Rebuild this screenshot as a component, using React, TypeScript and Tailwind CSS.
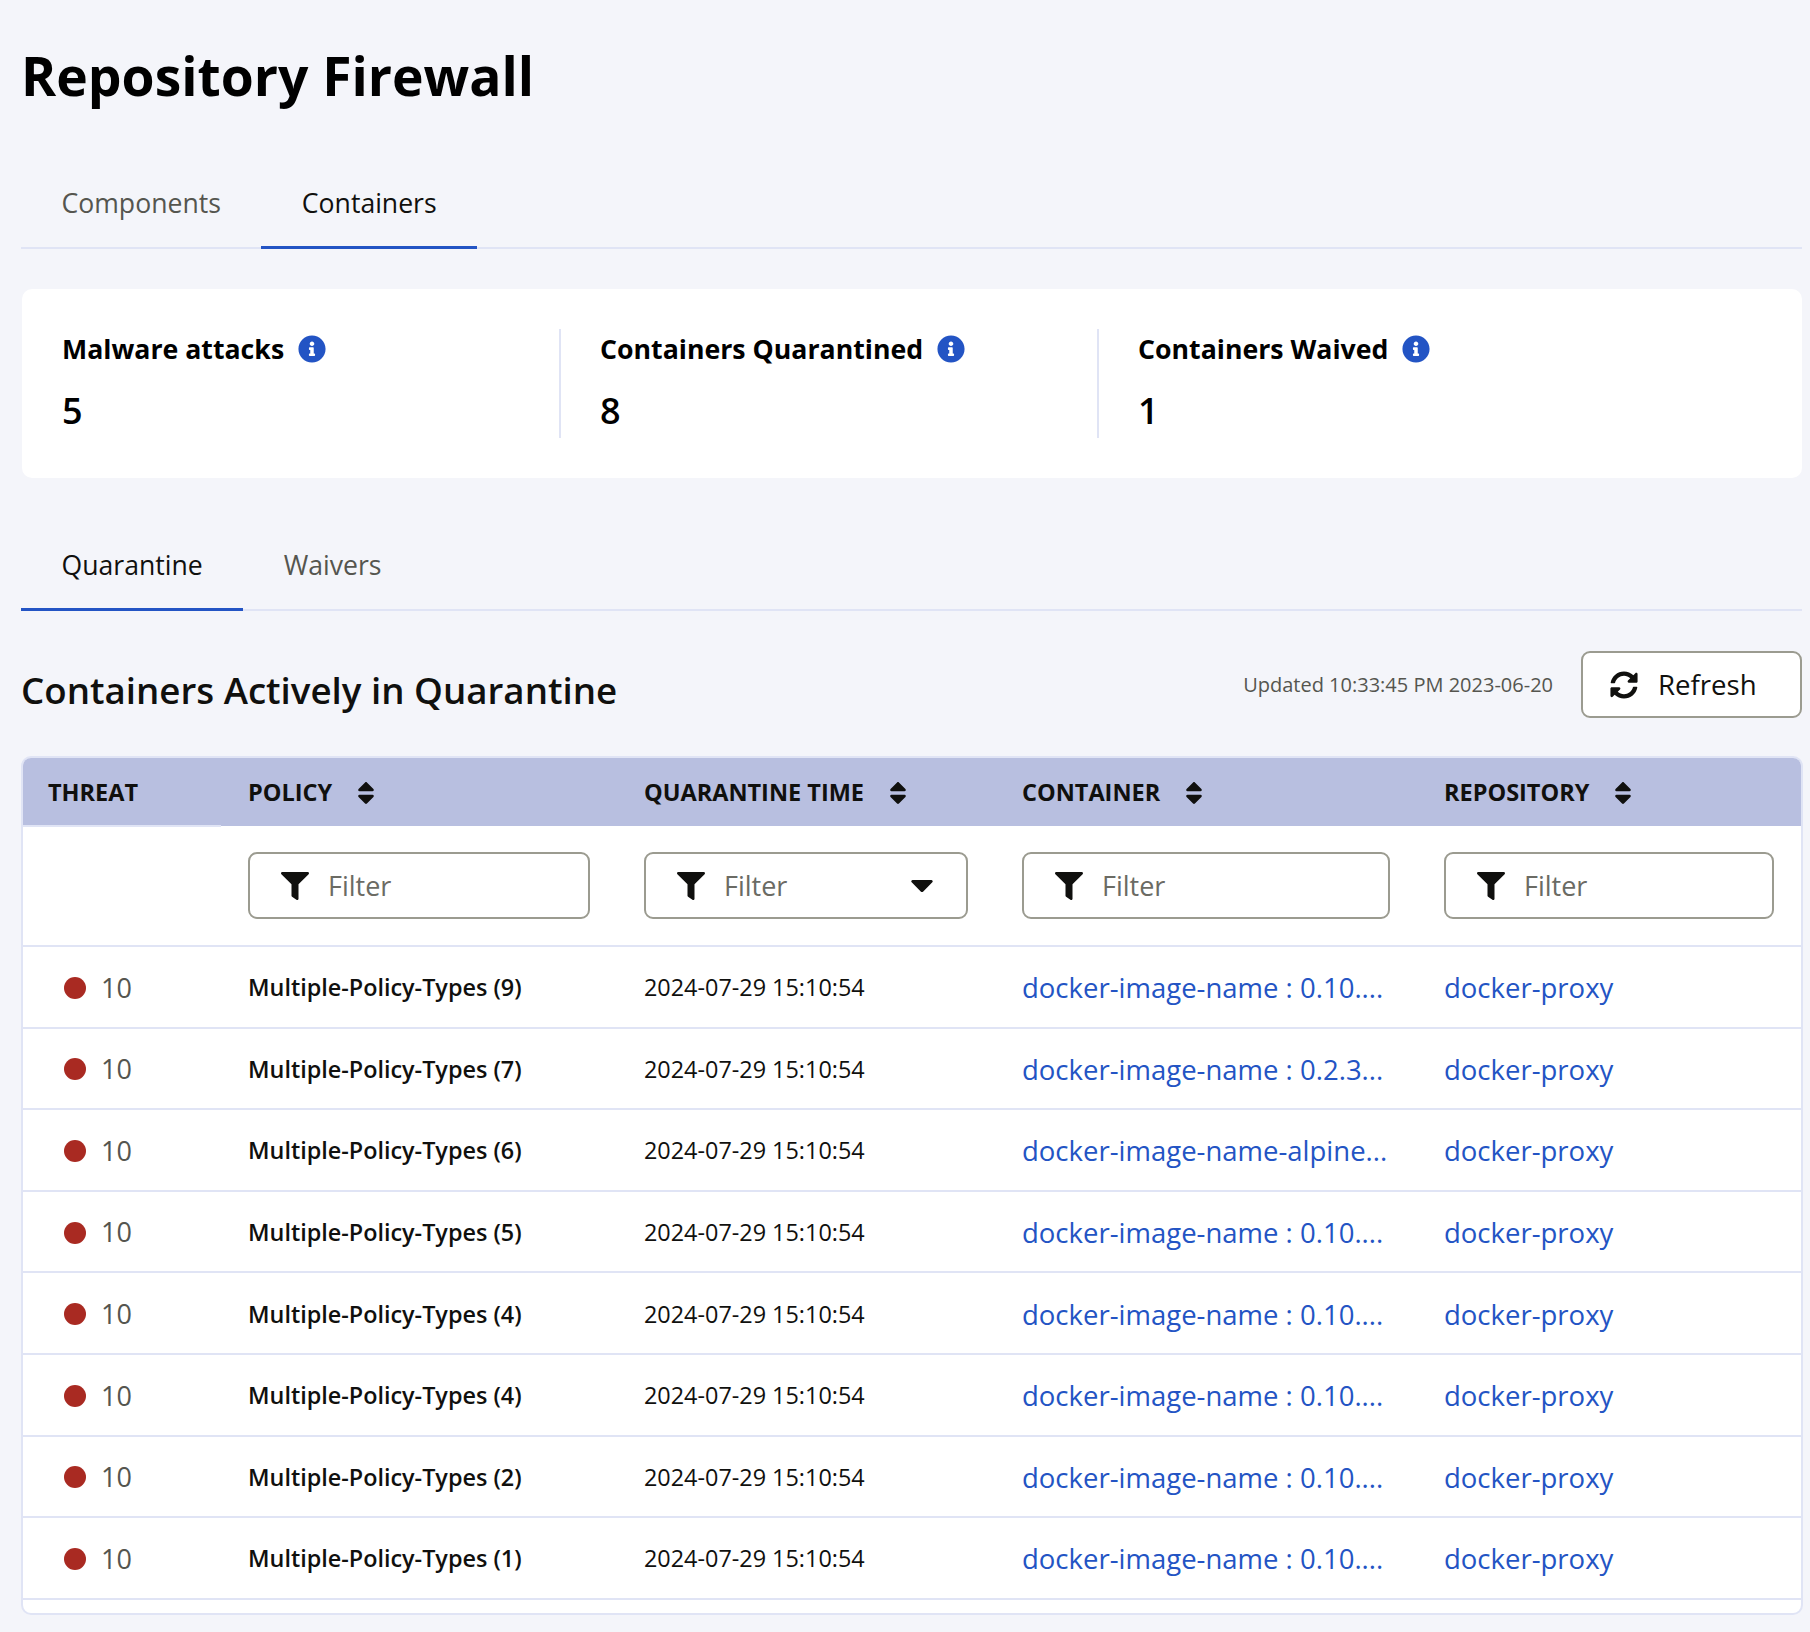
import React from 'react';
import { FaCaretDown, FaFilter, FaInfoCircle, FaSort, FaSyncAlt } from 'react-icons/fa';

const rows = [
  { policy: 'Multiple-Policy-Types (9)', container: 'docker-image-name : 0.10....' },
  { policy: 'Multiple-Policy-Types (7)', container: 'docker-image-name : 0.2.3...' },
  { policy: 'Multiple-Policy-Types (6)', container: 'docker-image-name-alpine...' },
  { policy: 'Multiple-Policy-Types (5)', container: 'docker-image-name : 0.10....' },
  { policy: 'Multiple-Policy-Types (4)', container: 'docker-image-name : 0.10....' },
  { policy: 'Multiple-Policy-Types (4)', container: 'docker-image-name : 0.10....' },
  { policy: 'Multiple-Policy-Types (2)', container: 'docker-image-name : 0.10....' },
  { policy: 'Multiple-Policy-Types (1)', container: 'docker-image-name : 0.10....' },
];

const stats = [
  { label: 'Malware attacks', value: '5', box: 'w-[539px] pl-[40px] border-r-2' },
  { label: 'Containers Quarantined', value: '8', box: 'w-[538px] pl-[39px] border-r-2' },
  { label: 'Containers Waived', value: '1', box: 'w-[538px] pl-[39px]' },
];

const Tab: React.FC<{ label: string; active?: boolean }> = ({ label, active }) => (
  <div
    className={`-mb-[2px] flex h-[80px] items-center border-b-[3px] px-[40.5px] pb-[10px] pt-[2px] text-[26.6px] ${
      active ? 'border-[#2354c4] text-[#10100e]' : 'border-transparent text-[#55554f]'
    }`}
  >
    {label}
  </div>
);

const Filter: React.FC<{ caret?: boolean }> = ({ caret }) => (
  <div className="flex h-[67px] w-full items-center rounded-[9px] border-2 border-[#9b9b90] bg-white pl-[31px] pr-[32px]">
    <FaFilter className="h-[28px] w-[28px] shrink-0 text-[#10100e]" />
    <span className="ml-[19px] pt-[2px] text-[27px] font-normal text-[#6b6b64]">Filter</span>
    {caret && <FaCaretDown className="-mt-[3px] ml-auto h-[37px] w-[24px] text-[#10100e]" />}
  </div>
);

const HeaderCell: React.FC<{ label: string; sortable?: boolean; className?: string }> = ({ label, sortable = true, className }) => (
  <th className={`h-[68px] pt-[2px] text-left text-[23.5px] font-bold text-[#10100e] ${className ?? 'px-[27px]'}`}>
    <span className="flex items-center">
      {label}
      {sortable && <FaSort className="ml-[25px] h-[28px] w-[18px] text-[#10100e]" />}
    </span>
  </th>
);

export default function App() {
  return (
    <div className="min-h-[1632px] bg-[#f4f5fa] pl-[21px] pr-[8px] font-['Open_Sans',sans-serif] text-[#10100e]">
      <h1 className="pt-[38px] text-[53.4px] font-bold leading-[76px] text-[#000]">Repository Firewall</h1>

      <div className="mt-[55px] flex border-b-2 border-[#e0e4f5]">
        <Tab label="Components" />
        <Tab label="Containers" active />
      </div>

      <div className="ml-[1px] mt-[40px] flex h-[189px] items-center rounded-[10px] bg-white">
        {stats.map((s) => (
          <div key={s.label} className={`h-[109px] border-[#e0e4f5] ${s.box}`}>
            <div className="flex items-center pt-[1px] text-[26.7px] font-bold leading-[38px] text-[#000]">
              {s.label}
              <FaInfoCircle className="ml-[14px] h-[28px] w-[28px] text-[#2354c4]" />
            </div>
            <div className="mt-[18px] text-[36px] font-semibold leading-[50px] text-[#000]">{s.value}</div>
          </div>
        ))}
      </div>

      <div className="mt-[53px] flex border-b-2 border-[#e0e4f5]">
        <Tab label="Quarantine" active />
        <Tab label="Waivers" />
      </div>

      <div className="mt-[40px] flex h-[67px] items-center">
        <h2 className="pt-[13px] text-[36.7px] font-semibold text-[#10100e]">Containers Actively in Quarantine</h2>
        <span className="ml-auto pt-[1px] text-[20px] text-[#55554f]">Updated 10:33:45 PM 2023-06-20</span>
        <button className="ml-[28px] flex h-[67px] w-[221px] items-center rounded-[9px] border-2 border-[#9b9b90] bg-white pl-[27px] text-[27.6px] font-medium text-[#10100e]">
          <FaSyncAlt className="h-[28px] w-[28px]" />
          <span className="ml-[20px]">Refresh</span>
        </button>
      </div>

      <div className="-mr-[1px] mt-[38px] overflow-hidden rounded-[10px] border-2 border-[#e0e4f5] bg-white pb-[13px]">
        <table className="w-full table-fixed border-collapse">
          <colgroup>
            <col className="w-[198px]" />
            <col className="w-[396px]" />
            <col className="w-[378px]" />
            <col className="w-[422px]" />
            <col />
          </colgroup>
          <thead>
            <tr className="bg-[#b8bfe0]">
              <HeaderCell label="THREAT" sortable={false} className="border-b-2 border-[#e0e4f5] pl-[25px]" />
              <HeaderCell label="POLICY" />
              <HeaderCell label="QUARANTINE TIME" />
              <HeaderCell label="CONTAINER" />
              <HeaderCell label="REPOSITORY" />
            </tr>
            <tr className="border-b-2 border-[#e0e4f5]">
              <th className="h-[120px]" />
              <th className="px-[27px]"><Filter /></th>
              <th className="px-[27px]"><Filter caret /></th>
              <th className="px-[27px]"><Filter /></th>
              <th className="px-[27px]"><Filter /></th>
            </tr>
          </thead>
          <tbody>
            {rows.map((row, i) => (
              <tr key={i} className="h-[81.6px] border-b-2 border-[#e0e4f5]">
                <td className="pl-[41px] pt-[2px]">
                  <span className="flex items-center text-[27px] text-[#55554f]">
                    <span className="h-[22px] w-[22px] rounded-full bg-[#a92a22]" />
                    <span className="ml-[15px]">10</span>
                  </span>
                </td>
                <td className="px-[27px] pt-[2px] text-[23.4px] font-semibold text-[#10100e]">{row.policy}</td>
                <td className="px-[27px] pt-[2px] text-[23.4px] font-medium text-[#10100e]">2024-07-29 15:10:54</td>
                <td className="whitespace-nowrap px-[27px] pt-[2px] text-[27.5px] font-medium text-[#2354c4]">{row.container}</td>
                <td className="px-[27px] pt-[2px] text-[27.5px] font-medium text-[#2354c4]">docker-proxy</td>
              </tr>
            ))}
          </tbody>
        </table>
      </div>
    </div>
  );
}
